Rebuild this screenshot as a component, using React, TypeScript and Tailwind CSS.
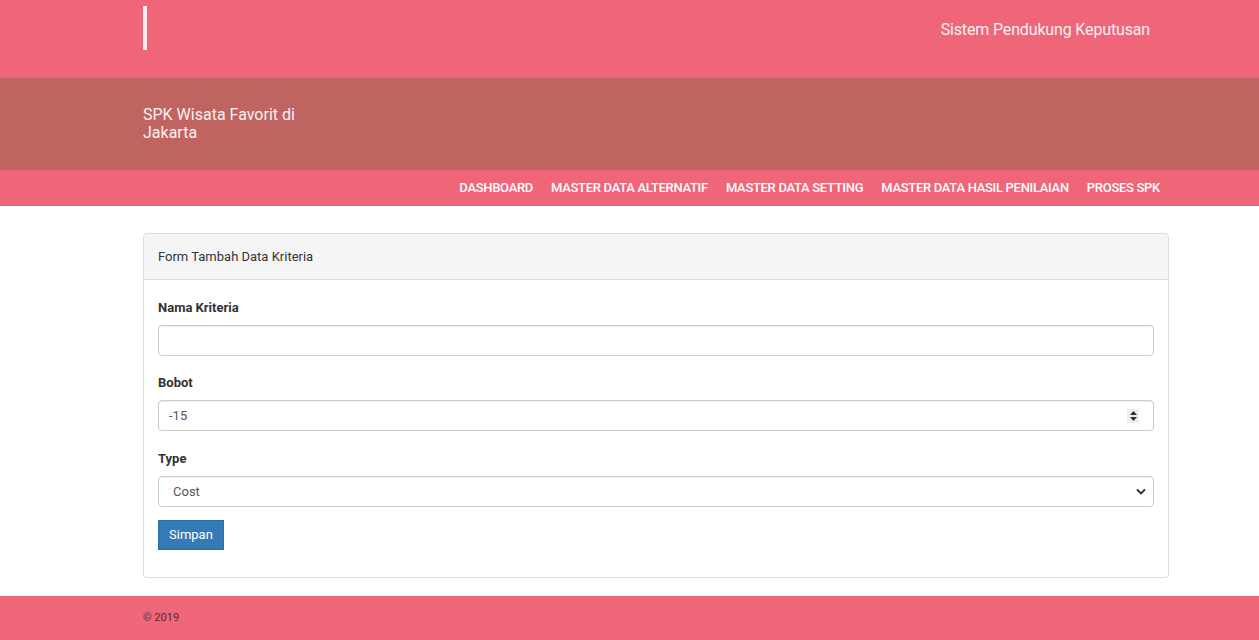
import React from 'react';

const navItems = ['Dashboard', 'Master Data Alternatif', 'Master Data Setting', 'Master Data Hasil Penilaian', 'Proses SPK'];

const App: React.FC = () => {
  return (
    <div className="min-h-screen bg-white font-['Roboto',sans-serif] text-[13px] text-[#333]">
      <header className="bg-[#f06679] h-[78px]">
        <div className="ml-[143px] w-[1025px] flex justify-between">
          <div className="mt-[6px] w-[4px] h-[44px] bg-[#fbe9ec]"></div>
          <div className="mt-[18px] mr-[18px] text-[16px] tracking-[-0.15px] text-[#fdf0f2]">Sistem Pendukung Keputusan</div>
        </div>
      </header>
      <div className="bg-[#c06462] h-[92px]">
        <div className="ml-[143px] pt-[28px] w-[170px] text-[16px] leading-[18px] text-[#fdf0f2]">
          SPK Wisata Favorit di Jakarta
        </div>
      </div>
      <nav className="bg-[#f06679] h-[36px]">
        <div className="ml-[143px] w-[1025px] h-full flex justify-end items-center pr-[8px] gap-[18px]">
          {navItems.map((item) => (
            <span key={item} className="uppercase text-white text-[13px] font-medium tracking-[-0.3px]">{item}</span>
          ))}
        </div>
      </nav>
      <main className="pt-[27px] pb-[18px]">
        <div className="ml-[143px] w-[1026px] border border-[#ddd] rounded-[4px] bg-white">
          <div className="h-[46px] bg-[#f5f5f5] border-b border-[#ddd] rounded-t-[4px] px-[14px] flex items-center text-[13px] text-[#333]">
            Form Tambah Data Kriteria
          </div>
          <div className="px-[14px] pt-[19px] pb-[27px]">
            <div className="mb-[18px]">
              <label className="block font-bold text-[13px] leading-[18px] mb-[8px]">Nama Kriteria</label>
              <input className="block w-full h-[31px] border border-[#ccc] rounded-[4px] px-[10px] shadow-[inset_0_1px_1px_rgba(0,0,0,0.075)] outline-none" />
            </div>
            <div className="mb-[19px]">
              <label className="block font-bold text-[13px] leading-[18px] mb-[8px]">Bobot</label>
              <div className="w-full h-[31px] border border-[#ccc] rounded-[4px] pl-[10px] pr-[14px] flex items-center justify-between shadow-[inset_0_1px_1px_rgba(0,0,0,0.075)] text-[#555]">
                <span>-15</span>
                <span className="w-[12px] h-[14px] bg-[#eee] flex flex-col items-center justify-center gap-[2px]">
                  <svg width="7" height="4" viewBox="0 0 7 4"><path d="M0 4 L3.5 0 L7 4 Z" fill="#333" /></svg>
                  <svg width="7" height="4" viewBox="0 0 7 4"><path d="M0 0 L3.5 4 L7 0 Z" fill="#333" /></svg>
                </span>
              </div>
            </div>
            <div className="mb-[13px]">
              <label className="block font-bold text-[13px] leading-[18px] mb-[8px]">Type</label>
              <div className="w-full h-[31px] border border-[#ccc] rounded-[4px] pl-[14px] pr-[7px] flex items-center justify-between shadow-[inset_0_1px_1px_rgba(0,0,0,0.075)] text-[#555]">
                <span>Cost</span>
                <svg width="10" height="7" viewBox="0 0 10 7"><path d="M1 1.5 L5 5.5 L9 1.5" stroke="#333" strokeWidth="1.8" fill="none" /></svg>
              </div>
            </div>
            <button className="h-[30px] px-[10px] bg-[#337ab7] border border-[#2e6da4] text-white text-[13px]">Simpan</button>
          </div>
        </div>
      </main>
      <footer className="bg-[#f06679] h-[44px] flex items-center">
        <div className="ml-[143px] text-[11px] text-[#5a2a33]">© 2019</div>
      </footer>
    </div>
  );
};

export default App;
